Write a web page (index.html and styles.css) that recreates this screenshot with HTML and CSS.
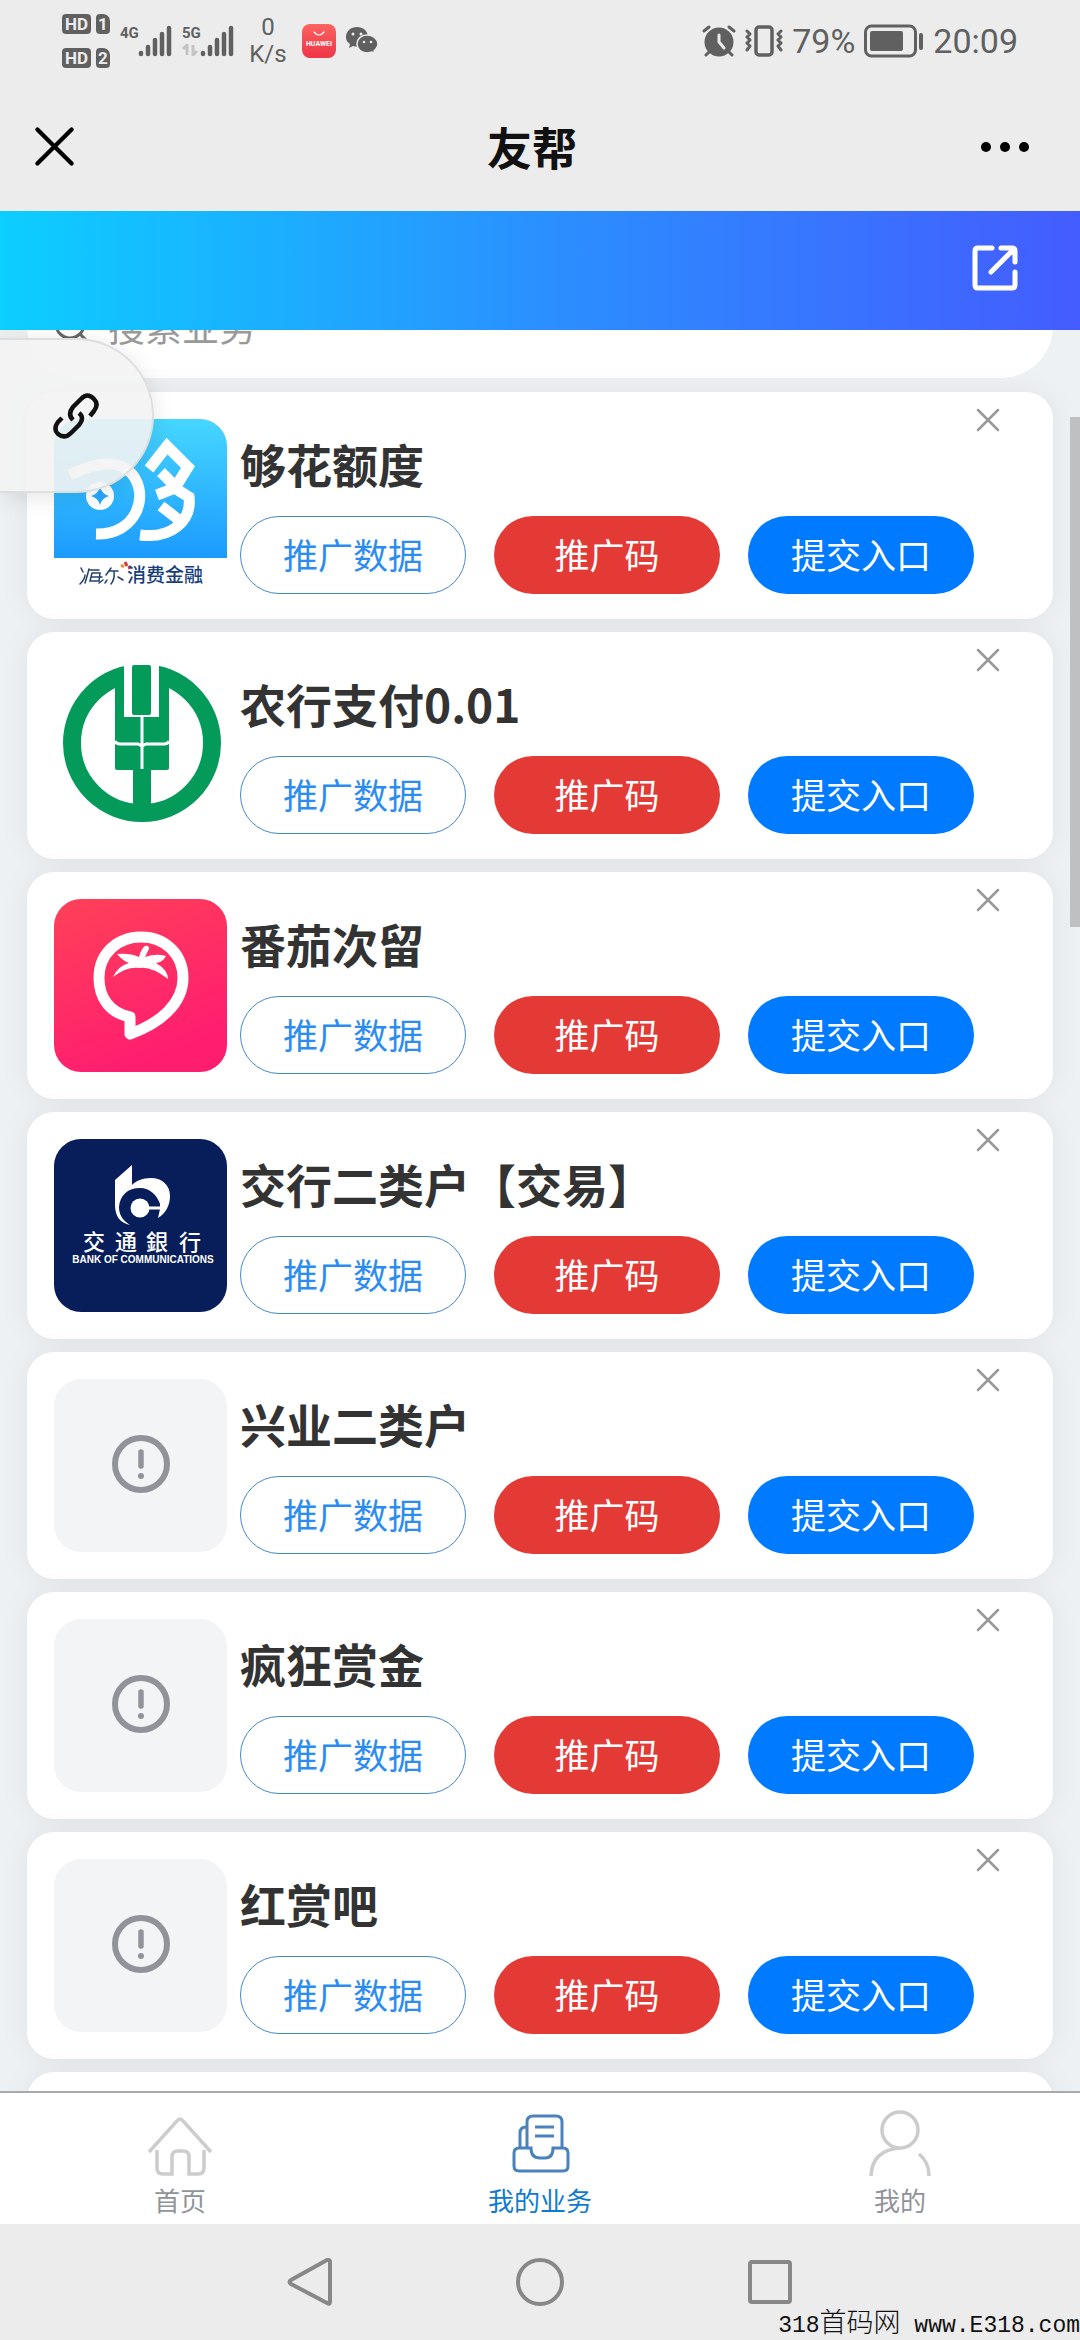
FILE: index.html
```html
<!DOCTYPE html>
<html lang="zh-CN">
<head>
    <meta charset="UTF-8">
    <meta name="viewport" content="width=device-width, initial-scale=1.0">
    <title>友帮</title>
    <link rel="stylesheet" href="styles.css">
</head>
<body>
<svg class="defs" aria-hidden="true">
    <symbol id="i-close" viewBox="0 0 24 24">
        <path d="M2 2L22 22M22 2L2 22" fill="none" stroke="currentColor" stroke-width="2.5" stroke-linecap="round"/>
    </symbol>
    <symbol id="i-signal" viewBox="0 0 34 32">
        <path d="M3 29V28M10 29V22M17 29V15M24 29V9M31 29V3" fill="none" stroke="currentColor" stroke-width="4.5" stroke-linecap="round"/>
    </symbol>
    <symbol id="i-warn" viewBox="0 0 58 58">
        <circle cx="29" cy="29" r="26" fill="none" stroke="currentColor" stroke-width="6"/>
        <path d="M29 17V31" stroke="currentColor" stroke-width="5.5" stroke-linecap="round"/>
        <circle cx="29" cy="41" r="3" fill="currentColor"/>
    </symbol>
</svg>

<div class="status-bar">
    <div class="status-left">
        <div class="hd-list">
            <div class="hd-row"><span class="hd">HD</span><span class="sim">1</span></div>
            <div class="hd-row"><span class="hd">HD</span><span class="sim">2</span></div>
        </div>
        <div class="network">
            <span class="net-type">4G</span>
            <svg class="signal"><use href="#i-signal"/></svg>
        </div>
        <div class="network">
            <div class="net-col">
                <span class="net-type">5G</span>
                <svg class="net-arrows" viewBox="0 0 16 12"><path d="M1 5L5 1V11M11 1V11L15 7" fill="none" stroke="currentColor" stroke-width="3"/></svg>
            </div>
            <svg class="signal"><use href="#i-signal"/></svg>
        </div>
        <div class="speed"><span>0</span><span>K/s</span></div>
        <svg class="huawei" viewBox="0 0 34 34">
            <defs><linearGradient id="g-hw" x1="0" y1="0" x2="0" y2="1"><stop offset="0" stop-color="#fc6360"/><stop offset="1" stop-color="#ee3548"/></linearGradient></defs>
            <rect width="34" height="34" rx="8" fill="url(#g-hw)"/>
            <path d="M12 8Q17 14 22 8" fill="none" stroke="#fff" stroke-width="1.2" stroke-linecap="round"/>
            <text x="17" y="22" text-anchor="middle" class="huawei-text">HUAWEI</text>
        </svg>
        <svg class="wechat" viewBox="0 0 32 28">
            <path d="M11 0C5 0 0 4 0 10C0 13 1 15 4 17L3 21L7 19L12 20C18 20 22 16 22 10C22 4 17 0 11 0Z" fill="currentColor"/>
            <path d="M21 8C15 8 11 12 11 17C11 22 15 26 21 26L26 25L29 27L28 24C30 22 32 20 32 17C32 12 27 8 21 8Z" fill="currentColor" stroke="#ececec" stroke-width="1.5"/>
            <g fill="#ececec"><circle cx="7" cy="7" r="1.5"/><circle cx="15" cy="7" r="1.5"/><circle cx="18" cy="15" r="1.3"/><circle cx="25" cy="15" r="1.3"/></g>
        </svg>
    </div>
    <div class="status-right">
        <svg class="alarm" viewBox="0 0 34 32">
            <circle cx="17" cy="17" r="14.5" fill="currentColor"/>
            <path d="M2 6L7 2M32 6L27 2M7 27L4 30M27 27L30 30" stroke="currentColor" stroke-width="3" stroke-linecap="round"/>
            <path d="M17 10V17L22 23" fill="none" stroke="#ececec" stroke-width="3" stroke-linecap="round"/>
        </svg>
        <svg class="vibrate" viewBox="0 0 38 32">
            <rect x="11" y="2" width="16" height="28" rx="3" fill="none" stroke="currentColor" stroke-width="3.5"/>
            <path d="M2 6L5 9L2 12L5 15L2 18L5 21L2 25M36 6L33 9L36 12L33 15L36 18L33 21L36 25" fill="none" stroke="currentColor" stroke-width="3" stroke-linejoin="round" stroke-linecap="round"/>
        </svg>
        <span class="status-text">79%</span>
        <svg class="battery" viewBox="0 0 60 34">
            <rect x="1.5" y="2" width="50" height="30" rx="6" fill="none" stroke="currentColor" stroke-width="3"/>
            <rect x="6" y="7" width="33" height="20" rx="2" fill="currentColor"/>
            <path d="M57 11V24" stroke="currentColor" stroke-width="4" stroke-linecap="round"/>
        </svg>
        <span class="status-text clock">20:09</span>
    </div>
</div>

<header class="title-bar">
    <button class="icon-btn" aria-label="关闭"><svg class="title-close"><use href="#i-close"/></svg></button>
    <h1>友帮</h1>
    <button class="icon-btn" aria-label="更多">
        <svg class="title-more" viewBox="0 0 50 12"><circle cx="6" cy="6" r="5"/><circle cx="25" cy="6" r="5"/><circle cx="44" cy="6" r="5"/></svg>
    </button>
</header>

<div class="banner">
    <button class="icon-btn" aria-label="分享">
        <svg class="share" viewBox="0 0 46 46">
            <path d="M20 3H6Q3 3 3 6V40Q3 43 6 43H40Q43 43 43 40V27M29 3H40Q43 3 43 6V17M41 5L19 27" fill="none" stroke="#fff" stroke-width="5" stroke-linecap="round" stroke-linejoin="round"/>
        </svg>
    </button>
</div>

<main class="content">
    <label class="search">
        <svg class="search-icon" viewBox="0 0 36 36"><circle cx="16" cy="16" r="14" fill="none" stroke="currentColor" stroke-width="3"/><path d="M26 26L33 33" stroke="currentColor" stroke-width="3"/></svg>
        <input type="text" placeholder="搜索业务" aria-label="搜索业务">
    </label>

    <section class="card">
        <svg class="logo" viewBox="0 0 173 173">
            <defs><linearGradient id="g-gou" x1="0" y1="0" x2="0" y2="1"><stop offset="0" stop-color="#46d7ff"/><stop offset="1" stop-color="#1b9aff"/></linearGradient></defs>
            <rect width="173" height="173" fill="#fff"/>
            <rect width="173" height="139" fill="url(#g-gou)"/>
            <g fill="none" stroke="#fff" stroke-width="11">
                <path d="M95 50L113 27L134 48L121 69L103 76M107 53L121 67M119 68L135 78C138 102 117 120 86 116M107 87L125 101"/>
                <path d="M16 56Q60 34 78 55C96 77 82 116 42 115"/>
            </g>
            <circle cx="46" cy="77" r="14" fill="#fff"/>
            <path d="M46 68Q48 75 55 77Q48 79 46 86Q44 79 37 77Q44 75 46 68Z" fill="#27a8ff"/>
            <path d="M27 149L29 153M26 165Q31 160 31 156M35 150Q33 158 31 164M36 151H45M38 154L36 162H45L46 154H38M37 158H48M45 164L49 161M57 149L52 156M56 152H64M60 153Q61 160 57 165M53 161L51 164M64 158L69 161" fill="none" stroke="#23406f" stroke-width="1.5" stroke-linecap="round"/>
            <path d="M67 146L70 148" stroke="#e8952f" stroke-width="3"/><path d="M71 143L73 147M77 148L74 149" stroke="#d63b3b" stroke-width="3"/>
            <text x="73" y="163" class="haier-text">消费金融</text>
        </svg>
        <div class="card-body">
            <h2>够花额度</h2>
            <div class="actions">
                <button class="btn btn-plain">推广数据</button>
                <button class="btn btn-red">推广码</button>
                <button class="btn btn-blue">提交入口</button>
            </div>
        </div>
        <button class="card-close" aria-label="移除"><svg><use href="#i-close"/></svg></button>
    </section>

    <section class="card">
        <svg class="logo" viewBox="0 0 173 173">
            <circle cx="88" cy="84" r="70" fill="none" stroke="#049a5a" stroke-width="18"/>
            <path d="M61 20H115V109Q115 111 113 111H97V150H79V111H63Q61 111 61 109Z" fill="#049a5a"/>
            <path d="M70 0H105V58H70Z" fill="#fff"/>
            <rect x="78" y="6" width="19" height="50" rx="2" fill="#049a5a"/>
            <path d="M88 56V110M61 82Q62 85 66 85H84L88 87L92 85H110Q114 85 115 82" fill="none" stroke="#fff" stroke-width="3"/>
        </svg>
        <div class="card-body">
            <h2>农行支付0.01</h2>
            <div class="actions">
                <button class="btn btn-plain">推广数据</button>
                <button class="btn btn-red">推广码</button>
                <button class="btn btn-blue">提交入口</button>
            </div>
        </div>
        <button class="card-close" aria-label="移除"><svg><use href="#i-close"/></svg></button>
    </section>

    <section class="card">
        <svg class="logo" viewBox="0 0 173 173">
            <defs><linearGradient id="g-tomato" x1="0" y1="0" x2=".4" y2="1"><stop offset="0" stop-color="#ff4158"/><stop offset="1" stop-color="#ff1d70"/></linearGradient></defs>
            <rect width="173" height="173" fill="url(#g-tomato)"/>
            <path d="M76 135V118C56 114 45 99 45 79C45 54 64 38 87 38C111 38 129 55 129 79C129 104 107 124 76 135Z" fill="none" stroke="#fff" stroke-width="11" stroke-linejoin="round"/>
            <path d="M59 78Q64 67 75 64Q69 62 63 55Q76 54 85 58Q87 50 91 47Q95 46 95 50L91 58Q102 54 112 57Q109 63 102 64Q114 71 114 80Q97 67 86 69Q73 67 59 78Z" fill="#fff"/>
        </svg>
        <div class="card-body">
            <h2>番茄次留</h2>
            <div class="actions">
                <button class="btn btn-plain">推广数据</button>
                <button class="btn btn-red">推广码</button>
                <button class="btn btn-blue">提交入口</button>
            </div>
        </div>
        <button class="card-close" aria-label="移除"><svg><use href="#i-close"/></svg></button>
    </section>

    <section class="card">
        <svg class="logo" viewBox="0 0 173 173">
            <rect width="173" height="173" fill="#081e5a"/>
            <path d="M78 26L61 41V66C61 77 66 84 76 86C68 81 65 75 65 68C66 56 74 49 86 49C96 49 103 56 106 65V70L104 79C112 74 116 66 116 57C116 46 108 39 97 39C88 39 82 42 78 46Z" fill="#fff"/>
            <circle cx="86" cy="69" r="9.5" fill="#fff"/>
            <path d="M86 69H107" stroke="#fff" stroke-width="3"/>
            <g class="bocom-name"><text x="29" y="111">交</text><text x="61" y="111">通</text><text x="92" y="111">銀</text><text x="125" y="111">行</text></g>
            <text x="89" y="124" text-anchor="middle" class="bocom-en">BANK OF COMMUNICATIONS</text>
        </svg>
        <div class="card-body">
            <h2>交行二类户【交易】</h2>
            <div class="actions">
                <button class="btn btn-plain">推广数据</button>
                <button class="btn btn-red">推广码</button>
                <button class="btn btn-blue">提交入口</button>
            </div>
        </div>
        <button class="card-close" aria-label="移除"><svg><use href="#i-close"/></svg></button>
    </section>

    <section class="card">
        <div class="logo logo-empty"><svg><use href="#i-warn"/></svg></div>
        <div class="card-body">
            <h2>兴业二类户</h2>
            <div class="actions">
                <button class="btn btn-plain">推广数据</button>
                <button class="btn btn-red">推广码</button>
                <button class="btn btn-blue">提交入口</button>
            </div>
        </div>
        <button class="card-close" aria-label="移除"><svg><use href="#i-close"/></svg></button>
    </section>

    <section class="card">
        <div class="logo logo-empty"><svg><use href="#i-warn"/></svg></div>
        <div class="card-body">
            <h2>疯狂赏金</h2>
            <div class="actions">
                <button class="btn btn-plain">推广数据</button>
                <button class="btn btn-red">推广码</button>
                <button class="btn btn-blue">提交入口</button>
            </div>
        </div>
        <button class="card-close" aria-label="移除"><svg><use href="#i-close"/></svg></button>
    </section>

    <section class="card">
        <div class="logo logo-empty"><svg><use href="#i-warn"/></svg></div>
        <div class="card-body">
            <h2>红赏吧</h2>
            <div class="actions">
                <button class="btn btn-plain">推广数据</button>
                <button class="btn btn-red">推广码</button>
                <button class="btn btn-blue">提交入口</button>
            </div>
        </div>
        <button class="card-close" aria-label="移除"><svg><use href="#i-close"/></svg></button>
    </section>

    <section class="card card-next"></section>

    <div class="scroll-thumb"></div>
    <button class="float-link" aria-label="链接">
        <svg viewBox="0 0 48 48">
            <path d="M38 24L42 19C45 15 46 11 42 7C37 2 33 3 29 7L21 15C17 20 17 24 21 28M10 26L6 30C3 34 2 38 6 42C11 46 15 45 19 41L27 33C31 28 31 24 27 21" fill="none" stroke="#111" stroke-width="4.5"/>
        </svg>
    </button>
</main>

<nav class="tabs">
    <a class="tab" href="#">
        <svg viewBox="0 0 66 66">
            <path d="M2 42L30 11Q33 7 36 11L64 42M10 40V58Q10 64 16 64H25V47Q25 41 31 41H36Q42 41 42 47V64H51Q57 64 57 58V40" fill="none" stroke="#ccc" stroke-width="3.5"/>
        </svg>
        <span>首页</span>
    </a>
    <a class="tab active" href="#">
        <svg viewBox="0 0 66 66">
            <path d="M7 43Q7 38 12 38H24Q24 48 33 48H38Q46 48 46 38H56Q61 38 61 43V56Q61 61 56 61H12Q7 61 7 56ZM20 38V12Q20 6 26 6H49Q55 6 55 12V38M13 38V23Q13 17 19 17M28 17H47M28 26H47" fill="none" stroke="#4a82bd" stroke-width="3"/>
        </svg>
        <span>我的业务</span>
    </a>
    <a class="tab" href="#">
        <svg viewBox="0 0 66 66">
            <circle cx="33" cy="20" r="18" fill="none" stroke="#ccc" stroke-width="3.5"/>
            <path d="M4 66Q5 40 33 38M52 44Q62 52 62 66" fill="none" stroke="#ccc" stroke-width="3.5"/>
        </svg>
        <span>我的</span>
    </a>
</nav>

<div class="system-nav">
    <button class="icon-btn" aria-label="返回"><svg viewBox="0 0 48 48"><path d="M42 2Q44 2 44 4V44Q44 47 41 45L5 26Q2 24 5 22L41 2Z" fill="none" stroke="#888" stroke-width="4"/></svg></button>
    <button class="icon-btn" aria-label="主屏幕"><svg viewBox="0 0 48 48"><circle cx="24" cy="24" r="22" fill="none" stroke="#888" stroke-width="4"/></svg></button>
    <button class="icon-btn" aria-label="最近任务"><svg viewBox="0 0 48 48"><rect x="4" y="4" width="40" height="40" rx="2" fill="none" stroke="#888" stroke-width="4"/></svg></button>
    <div class="watermark">318<span>首码网</span> www.E318.com</div>
</div>
</body>
</html>
```

FILE: styles.css
```css
* {
    box-sizing: border-box;
}
html,
body {
    height: 100%;
    margin: 0;
    padding: 0;
}
body {
    display: flex;
    flex-direction: column;
    overflow: hidden;
    background-color: #ececec;
    font-family: "Noto Sans CJK SC", sans-serif;
    color: #333;
}
button {
    margin: 0;
    padding: 0;
    border: 0;
    background: none;
    font-family: inherit;
}
svg {
    display: block;
}
.defs {
    position: absolute;
    width: 0;
    height: 0;
}

/* status bar */
.status-bar {
    flex: none;
    display: flex;
    justify-content: space-between;
    height: 82px;
    padding: 0 62px;
    color: #606060;
}
.status-left,
.status-right {
    display: flex;
    align-items: center;
}
.status-left {
    gap: 10px;
}
.hd-list {
    display: flex;
    flex-direction: column;
    gap: 14px;
}
.hd-row {
    display: flex;
    gap: 5px;
}
.hd,
.sim {
    height: 20px;
    border-radius: 4px;
    background-color: #606060;
    color: #ececec;
    font: bold 17px/20px Roboto, sans-serif;
    text-align: center;
}
.hd {
    width: 29px;
}
.sim {
    width: 14px;
    border-top-right-radius: 7px;
}
.network {
    display: flex;
    align-items: flex-start;
    height: 32px;
}
.net-col {
    display: flex;
    flex-direction: column;
    gap: 2px;
}
.net-type {
    width: 18px;
    font: bold 15px/17px Roboto, sans-serif;
}
.net-arrows {
    width: 16px;
    height: 12px;
    color: #c4c4c4;
}
.signal {
    width: 34px;
    height: 32px;
}
.speed {
    display: flex;
    flex-direction: column;
    width: 48px;
    text-align: center;
    font: 24px/27px Roboto, sans-serif;
}
.huawei {
    width: 34px;
    height: 34px;
}
.huawei-text {
    font: bold 7px Roboto, sans-serif;
    fill: #fff;
}
.wechat {
    width: 32px;
    height: 28px;
}
.status-right {
    gap: 9px;
}
.alarm {
    width: 34px;
    height: 32px;
}
.vibrate {
    width: 38px;
    height: 32px;
}
.status-text {
    font: 34px/40px Roboto, sans-serif;
}
.battery {
    width: 60px;
    height: 34px;
}

/* title bar */
.icon-btn {
    display: flex;
    align-items: center;
    justify-content: center;
}
.title-bar {
    flex: none;
    display: grid;
    grid-template-columns: 1fr auto 1fr;
    align-items: center;
    height: 129px;
    padding: 0 50px 0 34px;
    color: #222;
}
.title-bar .icon-btn:first-child {
    justify-self: start;
}
.title-bar .icon-btn:last-child {
    justify-self: end;
}
.title-bar h1 {
    margin: 0;
    color: #111;
    font-size: 45px;
    font-weight: 700;
    line-height: 60px;
}
.title-close {
    width: 41px;
    height: 41px;
}
.title-more {
    width: 50px;
    height: 12px;
}
.banner {
    flex: none;
    display: flex;
    align-items: center;
    justify-content: flex-end;
    height: 119px;
    padding: 0 62px 6px;
    background: linear-gradient(90deg, #0cceff, #2a90ff 50%, #445cff);
}
.share {
    width: 46px;
    height: 46px;
}

/* list */
.content {
    position: relative;
    flex: 1;
    min-height: 0;
    padding: 0 27px;
    overflow: hidden;
    background-color: #edf1f4;
}
.search {
    display: flex;
    align-items: center;
    gap: 18px;
    height: 104px;
    margin-top: -56px;
    margin-bottom: 14px;
    padding: 0 27px;
    border-radius: 52px;
    background-color: #fff;
}
.search-icon {
    width: 36px;
    height: 36px;
    color: #666;
}
.search input {
    flex: 1;
    min-width: 0;
    padding: 0;
    border: 0;
    outline: 0;
    background: none;
    font-family: inherit;
    font-size: 37px;
    line-height: 56px;
}
.search input::placeholder {
    color: #999;
}
.card {
    position: relative;
    display: flex;
    align-items: flex-start;
    gap: 13px;
    margin-bottom: 13px;
    padding: 27px 27px 25px;
    border-radius: 27px;
    background-color: #fff;
    box-shadow: 0 0 32px rgba(0, 0, 0, .06);
}
.card-next {
    height: 227px;
}
.logo {
    flex: none;
    width: 173px;
    height: 173px;
    border-radius: 27px;
}
.logo-empty {
    display: flex;
    align-items: center;
    justify-content: center;
    padding-bottom: 4px;
    background-color: #f3f4f6;
    color: #909399;
}
.logo-empty svg {
    width: 58px;
    height: 58px;
}
.haier-text {
    font-size: 19px;
    font-weight: 500;
    fill: #173f7c;
}
.bocom-name {
    font-size: 22px;
    font-weight: 500;
    fill: #fff;
}
.bocom-en {
    font: bold 10px "Liberation Sans", sans-serif;
    fill: #fff;
}
.card-body h2 {
    margin: 14px 0 23px;
    font-size: 46px;
    font-weight: 700;
    line-height: 60px;
}
.actions {
    display: flex;
    gap: 28px;
}
.btn {
    width: 226px;
    height: 78px;
    padding-bottom: 4px;
    border-radius: 39px;
    color: #fff;
    font-size: 35px;
}
.btn-plain {
    border: 1px solid #4489c8;
    color: #2d8cf0;
}
.btn-red {
    background-color: #e43a36;
}
.btn-blue {
    background-color: #007aff;
}
.card-close {
    position: absolute;
    top: 6px;
    right: 43px;
    padding: 10px;
    color: #999;
}
.card-close svg {
    width: 24px;
    height: 24px;
}
.scroll-thumb {
    position: absolute;
    top: 87px;
    right: 0;
    width: 10px;
    height: 510px;
    background-color: #bfc0c1;
}
.float-link {
    position: absolute;
    top: 8px;
    left: 0;
    display: flex;
    align-items: center;
    justify-content: flex-end;
    width: 154px;
    height: 155px;
    padding-right: 52px;
    border: 2px solid #dedede;
    border-left: 0;
    border-radius: 0 78px 78px 0;
    background-color: rgba(243, 243, 243, .9);
    box-shadow: 0 4px 24px rgba(0, 0, 0, .1);
}
.float-link svg {
    width: 48px;
    height: 48px;
}

/* bottom tabs */
.tabs {
    flex: none;
    display: flex;
    height: 133px;
    border-top: 2px solid #aaa;
    background-color: #fff;
}
.tab {
    flex: 1;
    display: flex;
    flex-direction: column;
    align-items: center;
    gap: 4px;
    padding-top: 17px;
    color: #909399;
    font-size: 26px;
    line-height: 40px;
    text-decoration: none;
}
.tab svg {
    width: 66px;
    height: 66px;
}
.tab.active {
    color: #0f7ad0;
}

.system-nav {
    position: relative;
    flex: none;
    display: flex;
    align-items: center;
    justify-content: center;
    gap: 182px;
    height: 116px;
}
.system-nav svg {
    width: 48px;
    height: 48px;
}
.watermark {
    position: absolute;
    right: 0;
    bottom: 0;
    color: #111;
    font: 23px/27px "Liberation Mono", "Noto Sans CJK SC", monospace;
    white-space: pre;
}
.watermark span {
    font-size: 27px;
    line-height: 27px;
    font-weight: 300;
}
```
